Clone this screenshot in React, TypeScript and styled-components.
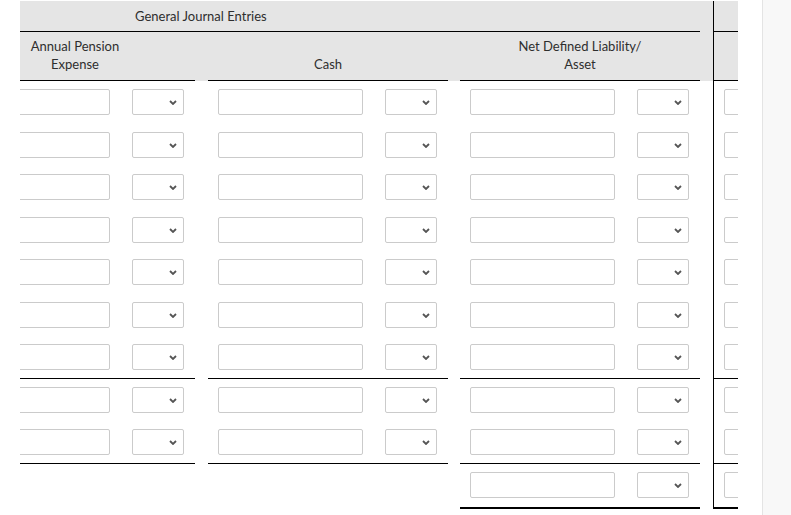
import React from "react";
import styled, { createGlobalStyle } from "styled-components";

const GlobalStyle = createGlobalStyle`
  html, body {
    margin: 0;
    padding: 0;
    background: #fff;
  }
  body {
    font-family: Lato, "Liberation Sans", sans-serif;
    font-size: 13px;
    color: #2e2e2e;
  }
`;

type Rule = "none" | "thin" | "thick";

const ruleCss = (rule?: Rule) =>
  rule === "thick"
    ? "2px solid #000"
    : rule === "thin"
    ? "1px solid #000"
    : "none";

const Page = styled.div`
  display: flex;
  height: 515px;
  overflow: hidden;
`;

const Viewport = styled.div`
  margin-left: 20px;
  width: 718px;
  flex: none;
  overflow: hidden;
  padding-top: 1px;
`;

const Sheet = styled.div`
  margin-left: -65px;
  width: max-content;
`;

const SidePanel = styled.aside`
  margin-left: 24px;
  flex: 1;
  background: #f8f8f8;
  border-left: 1px solid #e4e4e4;
`;

const Row = styled.div<{ $height: number; $head?: boolean }>`
  display: flex;
  height: ${(p) => p.$height}px;
  background: ${(p) => (p.$head ? "#e5e5e5" : "transparent")};
`;

const Gap = styled.div<{ $width: number }>`
  width: ${(p) => p.$width}px;
  flex: none;
`;

const Divider = styled.div`
  width: 1px;
  flex: none;
  background: #000;
`;

const TitleCell = styled.div`
  box-sizing: border-box;
  width: 745px;
  flex: none;
  display: flex;
  align-items: center;
  padding-left: 180px;
  border-bottom: 1px solid #000;
`;

const HeadCell = styled.div<{ $rule?: Rule }>`
  box-sizing: border-box;
  width: 240px;
  flex: none;
  display: flex;
  align-items: flex-end;
  justify-content: center;
  padding-bottom: 7px;
  text-align: center;
  line-height: 18px;
  border-bottom: ${(p) => ruleCss(p.$rule)};
`;

const EntryCell = styled.div<{ $rule?: Rule }>`
  box-sizing: border-box;
  width: 240px;
  flex: none;
  display: flex;
  align-items: center;
  gap: 22px;
  padding: 0 11px 0 10px;
  border-bottom: ${(p) => ruleCss(p.$rule)};
`;

const AmountBox = styled.input`
  box-sizing: border-box;
  width: 145px;
  height: 26px;
  margin: 0;
  padding: 0 4px;
  border: 1px solid #cbcbcb;
  border-radius: 2px;
  background: #fff;
  font: inherit;
`;

const SelectWrap = styled.div`
  position: relative;
  width: 52px;
  height: 26px;
  flex: none;
`;

const Select = styled.select`
  box-sizing: border-box;
  width: 100%;
  height: 100%;
  margin: 0;
  border: 1px solid #cbcbcb;
  border-radius: 2px;
  background: #fff;
  appearance: none;
  font: inherit;
`;

const Chevron = styled.svg`
  position: absolute;
  right: 7px;
  top: 11px;
  pointer-events: none;
`;

function DrCrSelect() {
  return (
    <SelectWrap>
      <Select defaultValue="">
        <option value=""></option>
        <option value="dr">Dr</option>
        <option value="cr">Cr</option>
      </Select>
      <Chevron width="8" height="5" viewBox="0 0 8 5">
        <path d="M1 1 L4 4 L7 1" fill="none" stroke="#555" strokeWidth="1.8" />
      </Chevron>
    </SelectWrap>
  );
}

function Entry({ filled, rule }: { filled: boolean; rule?: Rule }) {
  return (
    <EntryCell $rule={rule}>
      {filled && (
        <>
          <AmountBox type="text" />
          <DrCrSelect />
        </>
      )}
    </EntryCell>
  );
}

type BodyRow = { height: number; filled: boolean[]; rules: Rule[] };

const all = [true, true, true, true];
const none: Rule[] = ["none", "none", "none", "none"];
const thin: Rule[] = ["thin", "thin", "thin", "thin"];

const BODY: BodyRow[] = [
  { height: 42.5, filled: all, rules: none },
  { height: 42.5, filled: all, rules: none },
  { height: 42.5, filled: all, rules: none },
  { height: 42.5, filled: all, rules: none },
  { height: 42.5, filled: all, rules: none },
  { height: 42.5, filled: all, rules: none },
  { height: 42.5, filled: all, rules: thin },
  { height: 42.5, filled: all, rules: none },
  { height: 42.5, filled: all, rules: thin },
  {
    height: 45,
    filled: [false, false, true, true],
    rules: ["none", "none", "thick", "thick"],
  },
];

function Columns({ render }: { render: (i: number) => React.ReactNode }) {
  return (
    <>
      {render(0)}
      <Gap $width={13} />
      {render(1)}
      <Gap $width={12} />
      {render(2)}
      <Gap $width={13} />
      <Divider />
      {render(3)}
    </>
  );
}

const HEADINGS = [
  ["Annual Pension", "Expense"],
  ["Cash"],
  ["Net Defined Liability/", "Asset"],
  [],
];

export default function App() {
  return (
    <>
      <GlobalStyle />
      <Page>
        <Viewport>
          <Sheet>
            <Row $height={31} $head>
              <TitleCell>General Journal Entries</TitleCell>
              <Gap $width={13} />
              <Divider />
              <HeadCell $rule="thin" />
            </Row>
            <Row $height={49} $head>
              <Columns
                render={(i) => (
                  <HeadCell key={i} $rule="thin">
                    <div>
                      {HEADINGS[i].map((line) => (
                        <div key={line}>{line}</div>
                      ))}
                    </div>
                  </HeadCell>
                )}
              />
            </Row>
            {BODY.map((row, r) => (
              <Row key={r} $height={row.height}>
                <Columns
                  render={(i) => (
                    <Entry key={i} filled={row.filled[i]} rule={row.rules[i]} />
                  )}
                />
              </Row>
            ))}
          </Sheet>
        </Viewport>
        <SidePanel />
      </Page>
    </>
  );
}
